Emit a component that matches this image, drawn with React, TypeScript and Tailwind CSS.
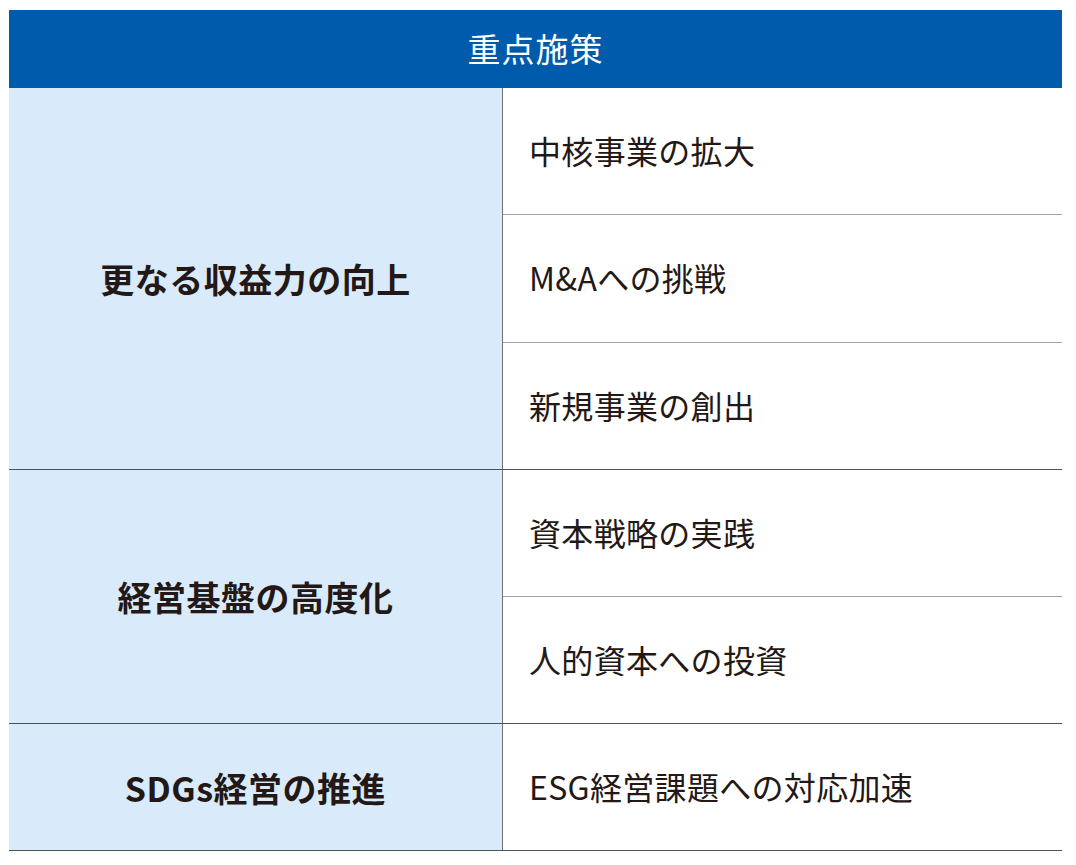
import React from "react";

interface Group {
  title: string;
  items: string[];
  height: string;
}

const groups: Group[] = [
  { title: "更なる収益力の向上", items: ["中核事業の拡大", "M&Aへの挑戦", "新規事業の創出"], height: "h-[382px]" },
  { title: "経営基盤の高度化", items: ["資本戦略の実践", "人的資本への投資"], height: "h-[254px]" },
  { title: "SDGs経営の推進", items: ["ESG経営課題への対応加速"], height: "h-[127px]" },
];

export default function App() {
  return (
    <div
      className="bg-white w-[1076px] h-[865px] pt-[10px] pl-[9px]"
      style={{ fontFamily: '"Noto Sans CJK JP", "Noto Sans", sans-serif' }}
    >
      <div className="w-[1053px] flex flex-col">
        <div className="h-[78px] bg-[#005bac] text-white flex items-center justify-center text-[33px] tracking-[0.03em]">
          重点施策
        </div>
        {groups.map((g) => (
          <div key={g.title} className={`flex border-b border-[#4b5258] ${g.height}`}>
            <div className="w-[494px] shrink-0 bg-[#d9ebfa] border-r border-[#6b7178] flex items-center justify-center">
              <span className="text-[34px] font-bold text-[#231815] tracking-[0.015em]">{g.title}</span>
            </div>
            <div className="flex-1 flex flex-col">
              {g.items.map((item, i) => (
                <div
                  key={item}
                  className={`flex-1 flex items-center pl-[26px] pb-[2px] text-[32px] text-[#231815] tracking-[0.01em] ${
                    i > 0 ? "border-t border-[#a3a3a3]" : ""
                  }`}
                >
                  {item}
                </div>
              ))}
            </div>
          </div>
        ))}
      </div>
    </div>
  );
}
